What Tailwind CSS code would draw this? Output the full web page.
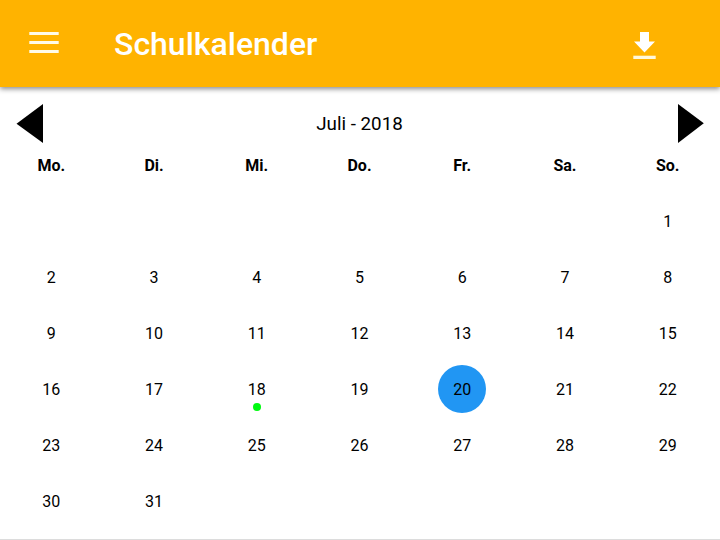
<!DOCTYPE html>
<html lang="de"><head><meta charset="utf-8"><title>Schulkalender</title>
<script src="https://cdn.jsdelivr.net/npm/@tailwindcss/browser@4"></script></head>
<body class="bg-white font-[Roboto,sans-serif] text-black">
<div class="flex h-[540px] w-[720px] flex-col overflow-hidden border-b border-[#dcdcdc]">
<header class="flex h-[87px] shrink-0 items-center bg-[#ffb300] pl-[29px] pr-[64px] text-white shadow-[0_2px_5px_rgba(0,0,0,0.45)]">
<svg class="-mt-[2px] h-[21px] w-[30px]" viewBox="0 0 30 21" fill="#fffbe8"><path d="M0.3 0h29.4v3H0.3zM0.3 9h29.4v3H0.3zM0.3 18h29.4v3H0.3z"/></svg>
<h1 class="ml-[55px] mt-px flex-1 text-[32px] font-medium leading-10">Schulkalender</h1>
<svg class="mt-[3px] h-[27px] w-[23px]" viewBox="0 0 23 27" fill="currentColor"><path d="M7 0h9v9.5h6L11.5 20.5 1 9.5h6z"/><path d="M.3 23.7h22.4V27H.3z" fill="#fff8dc"/></svg>
</header>
<div class="flex h-[72px] shrink-0 items-center justify-between px-4 pt-px">
<svg class="h-[39px] w-[27px]" viewBox="0 0 27 39"><path d="M27 0v39L.5 19.8z"/></svg>
<div class="pr-[2px] pt-px text-[18.8px]">Juli - 2018</div>
<svg class="h-[39px] w-[26px]" viewBox="0 0 26 39"><path d="M0 0v39l25.8-19.7z"/></svg>
</div>
<div id="days" class="grid w-[719px] grid-cols-7 text-center text-[16px]">
<div class="h-[35px] font-bold leading-[14px]">Mo.</div><div class="font-bold leading-[14px]">Di.</div><div class="font-bold leading-[14px]">Mi.</div><div class="font-bold leading-[14px]">Do.</div><div class="font-bold leading-[14px]">Fr.</div><div class="font-bold leading-[14px]">Sa.</div><div class="font-bold leading-[14px]">So.</div>
</div></div>
<script>
const grid=document.getElementById('days');
for(let i=-5;i<=31;i++){const c=document.createElement('div');c.className='relative flex h-[56px] items-center justify-center';
if(i>0){const n=document.createElement('span');n.textContent=i;if(i===20)n.className='-mt-[2px] flex size-[48px] items-center justify-center rounded-full bg-[#2196f3] pt-[2px]';c.append(n);}
if(i===18){const d=document.createElement('i');d.className='absolute left-1/2 top-[41px] size-2 -translate-x-1/2 rounded-full bg-[#00fa10]';c.append(d);}grid.append(c);}
</script></body></html>
